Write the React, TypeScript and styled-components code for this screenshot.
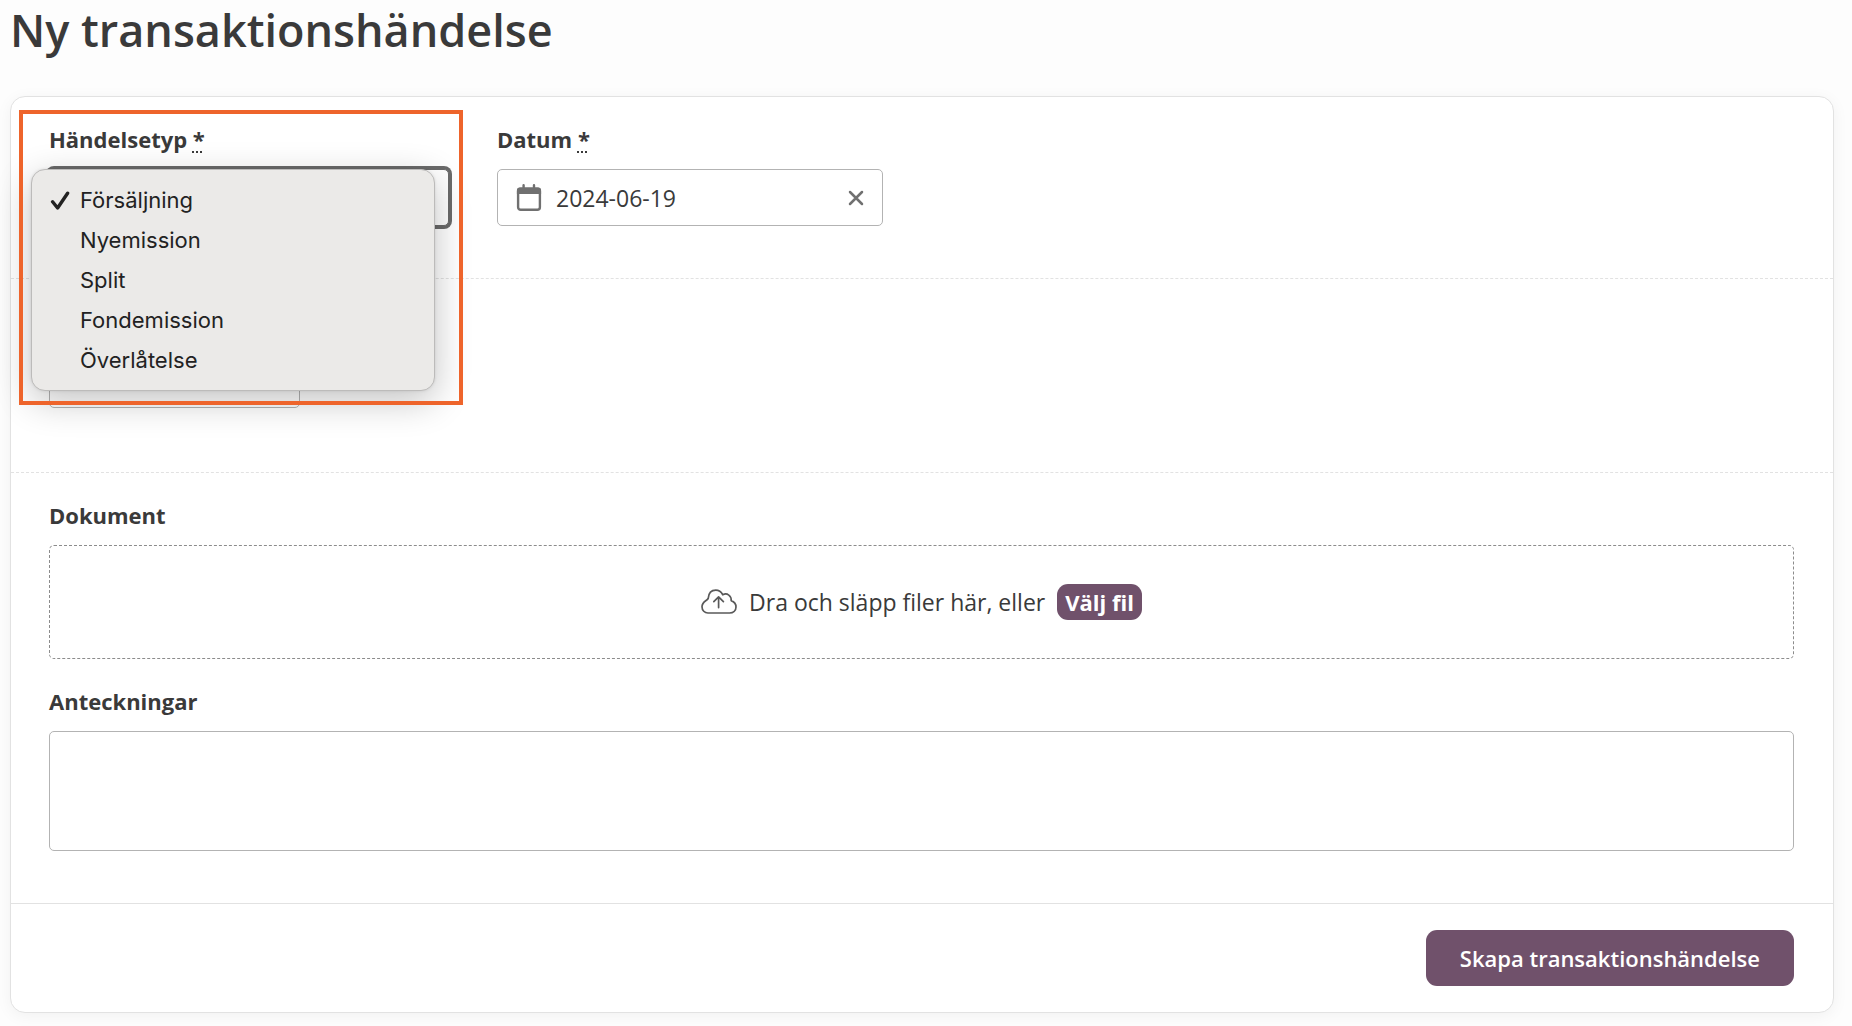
import React, { useState } from "react";
import styled, { createGlobalStyle, css } from "styled-components";

const GlobalStyle = createGlobalStyle`
  *, *::before, *::after { box-sizing: border-box; }
  body {
    margin: 0;
    background: #fdfdfd;
    color: #3a3a3a;
    font-family: "Open Sans", "Liberation Sans", sans-serif;
    font-size: 23px;
    line-height: 32px;
    font-variant-ligatures: none;
  }
  button, input, select, textarea { font: inherit; color: inherit; }
`;

const Page = styled.main`
  padding: 0 18px 14px 10px;
`;

const Title = styled.h1`
  margin: 0 0 36px;
  font-size: 45px;
  line-height: 60px;
  font-weight: 600;
`;

const Card = styled.form`
  background: #fff;
  border: 1px solid #e2e2e2;
  border-radius: 15px;
  box-shadow: 0 3px 16px rgba(0, 0, 0, 0.05);
`;

const Section = styled.section<{ $roomy?: boolean; $divided?: boolean }>`
  display: flex;
  flex-wrap: wrap;
  column-gap: 48px;
  padding: 0 39px ${(p) => (p.$roomy ? 64 : 52)}px 38px;
  ${(p) => p.$divided && css`border-bottom: 1px dashed #e2e2e2;`}
`;

const Field = styled.div<{ $width?: number }>`
  position: relative;
  display: flex;
  flex-direction: column;
  padding-top: 24px;
  width: ${(p) => (p.$width ? `${p.$width}px` : "100%")};
`;

const Label = styled.label`
  padding: 2px 0 14px;
  font-size: 22px;
  font-weight: 700;
  align-self: flex-start;
`;

const Required = styled.abbr`
  text-decoration: underline dotted 2px;
  text-underline-offset: 3px;
`;

const control = css`
  border: 1px solid #b3b3b3;
  border-radius: 5px;
  background: #fff;
  outline: none;
`;

const SelectBox = styled.div`
  position: relative;
  display: flex;
`;

const Select = styled.select`
  ${control}
  appearance: none;
  width: 100%;
  height: 57px;
  padding: 0 20px;
  border-color: #6b6b6b;
  box-shadow: 0 0 0 3px #6b6b6b;
`;

const Menu = styled.ul`
  position: absolute;
  z-index: 1;
  top: 0;
  left: -18px;
  right: 14px;
  margin: 0;
  padding: 10px 0;
  list-style: none;
  background: #ebeae8;
  border: 1px solid #bcbbba;
  border-radius: 14px;
  box-shadow: 0 10px 36px rgba(0, 0, 0, 0.24), 0 0 3px rgba(0, 0, 0, 0.1);
  font-family: Inter, "Liberation Sans", sans-serif;
  font-size: 22px;
  color: #222;
`;

const Option = styled.li`
  display: grid;
  grid-template-columns: 30px 1fr;
  align-items: center;
  height: 40px;
  padding-left: 18px;
  cursor: default;
`;

const OptionMark = styled.span`
  display: flex;
`;

const Highlight = styled.div`
  position: absolute;
  z-index: 2;
  top: 13px;
  right: -14px;
  bottom: -179px;
  left: -30px;
  border: 4px solid #ee642b;
  pointer-events: none;
`;

const TextInput = styled.input`
  ${control}
  height: 57px;
  padding: 0 20px;
`;

const HiddenLabelSpace = styled.div`
  height: 48px;
`;

const DateBox = styled.div`
  ${control}
  display: flex;
  align-items: center;
  gap: 14px;
  height: 57px;
  padding: 0 17px 0 18px;
`;

const DateInput = styled.input`
  flex: 1;
  min-width: 0;
  padding: 0;
  border: 0;
  outline: 0;
  background: none;
  font-weight: 500;
`;

const ClearButton = styled.button`
  display: flex;
  padding: 0;
  border: 0;
  background: none;
  cursor: pointer;
`;

const DropZone = styled.div`
  display: flex;
  align-items: center;
  justify-content: center;
  gap: 12px;
  height: 114px;
  border: 1px dashed #8c8c8c;
  border-radius: 5px;
`;

const PurpleButton = styled.button<{ $large?: boolean }>`
  border: 0;
  background: #70516b;
  color: #fff;
  font-size: 22px;
  font-weight: ${(p) => (p.$large ? 600 : 700)};
  cursor: pointer;
  border-radius: 11px;
  height: ${(p) => (p.$large ? 56 : 36)}px;
  padding: 0 ${(p) => (p.$large ? 34 : 8)}px;
`;

const Notes = styled.textarea`
  ${control}
  width: 100%;
  height: 120px;
  padding: 12px 20px;
  resize: none;
`;

const Footer = styled.footer`
  display: flex;
  justify-content: flex-end;
  padding: 26px 39px 26px;
  border-top: 1px solid #e2e2e2;
`;

const CheckIcon = () => (
  <svg width="20" height="20" viewBox="0 0 20 20" fill="none" stroke="#222" strokeWidth="3.4" strokeLinecap="round" strokeLinejoin="round" aria-hidden="true">
    <path d="M2.6 11.8 7.6 18 17.6 3.200" />
  </svg>
);

const CalendarIcon = () => (
  <svg width="26" height="28" viewBox="0 0 26 28" aria-hidden="true">
    <path d="M7.6 1.200v5M18 1.200v5" stroke="#707070" strokeWidth="2.4" strokeLinecap="round" />
    <rect x="2.100" y="4.600" width="21.800" height="21.200" rx="2.600" fill="none" stroke="#707070" strokeWidth="2.400" />
    <path d="M.900 10V6.200A2.800 2.800 0 0 1 3.700 3.400h18.600A2.800 2.800 0 0 1 25.100 6.200V10z" fill="#707070" />
  </svg>
);

const ClearIcon = () => (
  <svg width="18" height="18" viewBox="0 0 18 18" fill="none" stroke="#707070" strokeWidth="2.5" strokeLinecap="round" aria-hidden="true">
    <path d="M3 3l12 12M15 3 3 15" />
  </svg>
);

const CloudIcon = () => (
  <svg width="36" height="26" viewBox="0 0 36 26" fill="none" stroke="#5a5a5a" strokeWidth="1.700" strokeLinecap="round" strokeLinejoin="round" aria-hidden="true">
    <path d="M7 24h21.600C32.200 24 35 21.600 35 18c0-3.400-2-5.400-4.800-6.400C30.600 7 26.200 3.400 21.800 5.800 20 2.600 17.600 1.200 14.800 1.200c-4.400 0-7.200 3.200-7.600 8.200C6.400 11.600 1 12.400 1 17.800 1 21.400 3.600 24 7 24z" />
    <path d="M17.600 18.600V8M12.800 12.600 17.600 7.800l4.800 4.800" />
  </svg>
);

const eventTypes = ["Försäljning", "Nyemission", "Split", "Fondemission", "Överlåtelse"];

export default function App() {
  const [eventType, setEventType] = useState(eventTypes[0]);
  const [date, setDate] = useState("2024-06-19");

  return (
    <>
      <GlobalStyle />
      <Page>
        <Title>Ny transaktionshändelse</Title>
        <Card onSubmit={(e) => e.preventDefault()}>
          <Section $divided>
            <Field $width={400}>
              <Label htmlFor="event-type">
                Händelsetyp <Required>*</Required>
              </Label>
              <SelectBox>
                <Select id="event-type" value={eventType} onChange={(e) => setEventType(e.target.value)}>
                  {eventTypes.map((type) => (
                    <option key={type}>{type}</option>
                  ))}
                </Select>
                <Menu role="listbox" aria-label="Händelsetyp">
                  {eventTypes.map((type) => (
                    <Option key={type} role="option" aria-selected={type === eventType} onClick={() => setEventType(type)}>
                      <OptionMark>{type === eventType && <CheckIcon />}</OptionMark>
                      {type}
                    </Option>
                  ))}
                </Menu>
              </SelectBox>
              <Highlight />
            </Field>
            <Field $width={386}>
              <Label htmlFor="date">
                Datum <Required>*</Required>
              </Label>
              <DateBox>
                <CalendarIcon />
                <DateInput id="date" value={date} onChange={(e) => setDate(e.target.value)} />
                <ClearButton type="button" aria-label="Rensa datum" onClick={() => setDate("")}>
                  <ClearIcon />
                </ClearButton>
              </DateBox>
            </Field>
          </Section>
          <Section $divided $roomy>
            <Field $width={251}>
              <HiddenLabelSpace />
              <TextInput aria-label="Värde" />
            </Field>
          </Section>
          <Section>
            <Field>
              <Label as="div">Dokument</Label>
              <DropZone>
                <CloudIcon />
                <span>Dra och släpp filer här, eller</span>
                <PurpleButton type="button">Välj fil</PurpleButton>
              </DropZone>
            </Field>
            <Field>
              <Label htmlFor="notes">Anteckningar</Label>
              <Notes id="notes" />
            </Field>
          </Section>
          <Footer>
            <PurpleButton $large type="submit">Skapa transaktionshändelse</PurpleButton>
          </Footer>
        </Card>
      </Page>
    </>
  );
}
